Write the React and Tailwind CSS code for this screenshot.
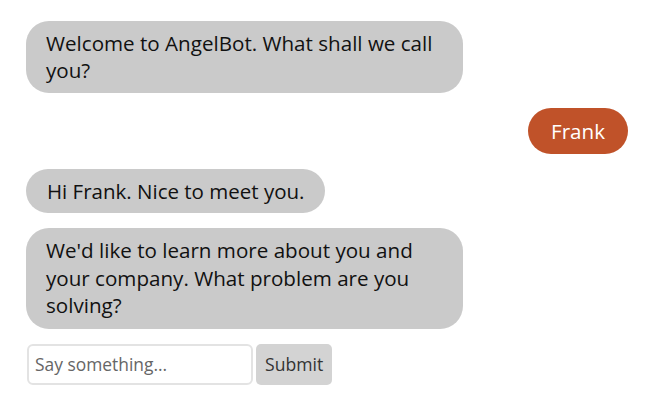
export default function App() {
  const font = { fontFamily: '"Open Sans", sans-serif' };
  return (
    <div className="w-[653px] h-[406px] bg-white pl-[26px] pr-[25px] pt-[21px]" style={font}>
      <div className="flex flex-col gap-[15px]">
        <div className="flex">
          <div className="max-w-[437px] bg-[#cacaca] text-[#111] rounded-[23px] px-[20px] py-[9px] text-[20.6px] leading-[27px]">
            Welcome to AngelBot. What shall we call you?
          </div>
        </div>
        <div className="flex justify-end">
          <div className="bg-[#c05229] text-white rounded-[23px] px-[23px] py-[9px] text-[20.6px] leading-[28px]">
            Frank
          </div>
        </div>
        <div className="flex">
          <div className="bg-[#cacaca] text-[#111] rounded-[23px] px-[21px] py-[8px] text-[20.5px] leading-[28px]">
            Hi Frank. Nice to meet you.
          </div>
        </div>
        <div className="flex">
          <div className="max-w-[437px] bg-[#cacaca] text-[#111] rounded-[23px] px-[20px] py-[9px] text-[20.6px] leading-[27.6px]">
            We'd like to learn more about you and your company. What problem are you solving?
          </div>
        </div>
      </div>
      <div className="flex gap-[3px] mt-[15px] ml-[1px]">
        <input
          type="text"
          placeholder="Say something..."
          className="w-[226px] h-[41px] border-2 border-[#e3e3e3] rounded-[6px] px-[6px] text-[17.4px] text-[#333] placeholder:text-[#666] outline-none"
          style={font}
        />
        <button className="h-[41px] px-[9px] bg-[#d3d3d3] rounded-[5px] text-[17.6px] text-[#333]" style={font}>
          Submit
        </button>
      </div>
    </div>
  );
}
